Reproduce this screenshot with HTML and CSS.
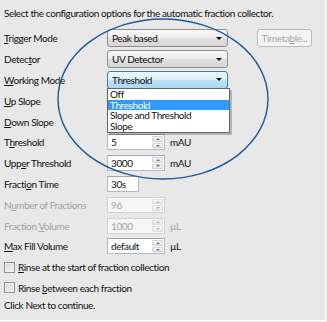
FILE: index.html
```html
<!DOCTYPE html>
<html lang="en">
<head>
    <meta charset="UTF-8">
    <title>Fraction Collector</title>
    <link rel="stylesheet" href="styles.css">
</head>
<body>
    <div class="page">
        <p class="intro">Select the configuration options for the automatic fraction collector.</p>

        <div class="form">
            <span class="lbl"><u>T</u>rigger Mode</span>
            <div class="ctl">
                <div class="combo"><span>Peak based</span><i class="arrow"></i></div>
                <button class="btn" disabled>Timeta<u>b</u>le...</button>
            </div>

            <span class="lbl">Detec<u>t</u>or</span>
            <div class="ctl">
                <div class="combo"><span>UV Detector</span><i class="arrow"></i></div>
            </div>

            <span class="lbl"><u>W</u>orking Mode</span>
            <div class="ctl">
                <div class="combo open">
                    <span>Threshold</span><i class="arrow"></i>
                    <ul class="list">
                        <li>Off</li>
                        <li class="sel">Threshold</li>
                        <li>Slope and Threshold</li>
                        <li>Slope</li>
                    </ul>
                </div>
            </div>

            <span class="lbl"><u>U</u>p Slope</span>
            <div class="ctl"></div>

            <span class="lbl"><u>D</u>own Slope</span>
            <div class="ctl"></div>

            <span class="lbl">T<u>h</u>reshold</span>
            <div class="ctl">
                <div class="spin"><span class="val">5</span><span class="btns"><b class="up"></b><b class="dn"></b></span></div>
                <span class="unit">mAU</span>
            </div>

            <span class="lbl">Upp<u>e</u>r Threshold</span>
            <div class="ctl">
                <div class="spin"><span class="val">3000</span><span class="btns"><b class="up"></b><b class="dn"></b></span></div>
                <span class="unit">mAU</span>
            </div>

            <span class="lbl">Fracti<u>o</u>n Time</span>
            <div class="ctl">
                <div class="field">30s</div>
            </div>

            <span class="lbl off">N<u>u</u>mber of Fractions</span>
            <div class="ctl">
                <div class="spin off"><span class="val">96</span><span class="btns"><b class="up"></b><b class="dn"></b></span></div>
            </div>

            <span class="lbl off">Fraction <u>V</u>olume</span>
            <div class="ctl">
                <div class="spin off"><span class="val">1000</span><span class="btns"><b class="up"></b><b class="dn"></b></span></div>
                <span class="unit off">µL</span>
            </div>

            <span class="lbl"><u>M</u>ax Fill Volume</span>
            <div class="ctl">
                <div class="spin"><span class="val">default</span><span class="btns"><b class="up"></b><b class="dn"></b></span></div>
                <span class="unit">µL</span>
            </div>
        </div>

        <label class="check"><span class="box"></span><span><u>R</u>inse at the start of fraction collection</span></label>
        <label class="check"><span class="box"></span><span>Rinse <u>b</u>etween each fraction</span></label>

        <p class="outro">Click Next to continue.</p>

        <!-- annotation drawn over the dialog -->
        <svg class="mark" width="327" height="322" viewBox="0 0 327 322">
            <ellipse cx="163" cy="99" rx="105" ry="80" fill="none" stroke="#1b5a9c" stroke-width="1.4"/>
        </svg>
    </div>
</body>
</html>
```

FILE: styles.css
```css
body {
    margin: 0;
    background: #e8e8e8;
    font-family: "Lato", "Open Sans", sans-serif;
    font-size: 10px;
    letter-spacing: -0.4px;
    color: #111;
}
u {
    text-decoration-thickness: 1px;
    text-underline-offset: 1px;
}
.page {
    position: relative;
    width: 326px;
    height: 321px;
    box-sizing: border-box;
    padding-left: 4px;
    border-right: 1px solid #fff;
    border-bottom: 1px solid #fff;
}
.intro {
    margin: 0 0 8px;
    padding-top: 6px;
    line-height: 14px;
}
.form {
    display: grid;
    grid-template-columns: 103px 1fr;
    grid-auto-rows: 20.8px;
    align-items: center;
}
.lbl {
    white-space: nowrap;
}
.off {
    color: #a3a3a3;
}
.ctl {
    display: flex;
    align-items: center;
    height: 100%;
}

/* combo boxes */
.combo {
    position: relative;
    display: flex;
    align-items: center;
    width: 121px;
    height: 18px;
    box-sizing: border-box;
    padding-left: 4px;
    border: 1px solid #8e8e8e;
    border-radius: 3px;
    background: linear-gradient(#f6f6f6 0%, #ededed 50%, #dfdfdf 51%, #d6d6d6 100%);
}
.combo span {
    flex: 1;
}
.combo.open {
    border-color: #3c7fb1;
    background: linear-gradient(#edf8fe 0%, #dcf0fb 50%, #bde5f9 51%, #a8d8f2 100%);
}
.arrow {
    width: 0;
    height: 0;
    margin-right: 5px;
    border-left: 3px solid transparent;
    border-right: 3px solid transparent;
    border-top: 3px solid #111;
}
.list {
    position: absolute;
    left: -1px;
    top: 16px;
    width: 121px;
    margin: 0;
    padding: 0;
    list-style: none;
    background: #fff;
    border: 1px solid #646464;
    box-shadow: 2px 2px 0 rgba(0, 0, 0, 0.22);
    z-index: 2;
}
.list li {
    height: 10.7px;
    line-height: 10.7px;
    padding-left: 2px;
}
.list li.sel {
    background: #3399ff;
    color: #fff;
}

.btn {
    width: 55px;
    height: 18px;
    margin-left: 29px;
    padding: 0;
    font: inherit;
    letter-spacing: inherit;
    color: #a6a6a6;
    background: #f4f4f4;
    border: 1px solid #b9bcbf;
    border-radius: 3px;
}

/* spin boxes and fields */
.spin,
.field {
    height: 16px;
    box-sizing: border-box;
    border: 1px solid #b5b8be;
    border-top-color: #a3a6ad;
    background: #fff;
}
.spin {
    display: flex;
    width: 58px;
}
.field {
    width: 32px;
    padding-left: 3px;
    line-height: 14px;
}
.val {
    flex: 1;
    padding-left: 3px;
    line-height: 14px;
}
.btns {
    display: flex;
    flex-direction: column;
    width: 12px;
    padding: 1px 1px 1px 0;
    gap: 1px;
    box-sizing: border-box;
}
.btns b {
    flex: 1;
    display: flex;
    align-items: center;
    justify-content: center;
    border: 1px solid #cfd1d4;
    border-radius: 1px;
    background: linear-gradient(#f8f8f8, #e6e6e6);
}
.btns b::after {
    content: "";
    border-left: 2px solid transparent;
    border-right: 2px solid transparent;
}
.up::after {
    border-bottom: 2px solid #5c6e88;
}
.dn::after {
    border-top: 2px solid #5c6e88;
}
.spin.off {
    background: #f6f6f6;
    border-color: #d2d2d2;
    color: #a3a3a3;
}
.spin.off .btns b {
    border-color: #dedede;
}
.spin.off .up::after {
    border-bottom-color: #b0b6c0;
}
.spin.off .dn::after {
    border-top-color: #b0b6c0;
}
.unit {
    margin-left: 5px;
}

/* checkboxes */
.check {
    display: flex;
    align-items: center;
    height: 20.8px;
}
.box {
    width: 11px;
    height: 11px;
    margin-right: 3px;
    box-sizing: border-box;
    border: 1px solid #8f8f8f;
    background: linear-gradient(135deg, #d6d6d6, #f4f4f4);
    box-shadow: inset 0 0 0 1px #f2f2f2;
}
.outro {
    margin: 0;
    line-height: 14px;
}

.mark {
    position: absolute;
    left: 0;
    top: 0;
    pointer-events: none;
}
```
